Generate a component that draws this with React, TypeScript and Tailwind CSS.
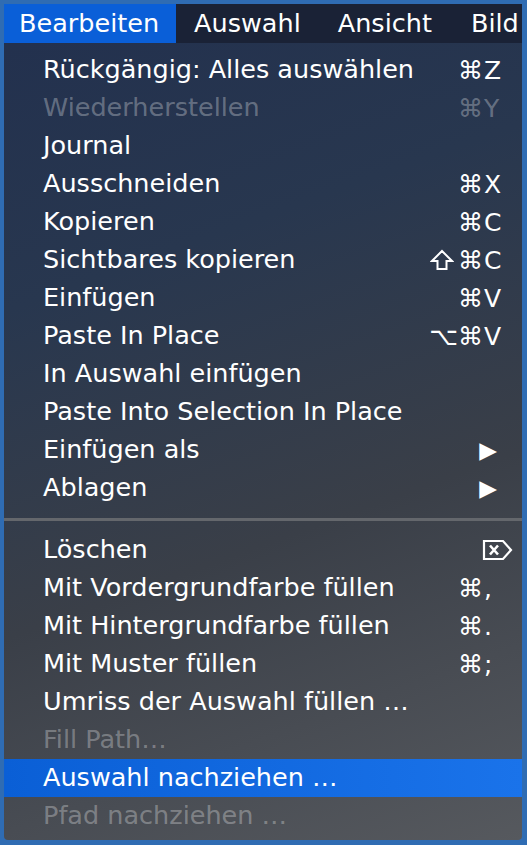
import React from 'react';

type Item = {
  label: string;
  mods?: string;
  keyChar?: string;
  disabled?: boolean;
  submenu?: boolean;
  del?: boolean;
  active?: boolean;
};

const groupA: Item[] = [
  { label: 'Rückgängig: Alles auswählen', mods: '⌘', keyChar: 'Z' },
  { label: 'Wiederherstellen', mods: '⌘', keyChar: 'Y', disabled: true },
  { label: 'Journal' },
  { label: 'Ausschneiden', mods: '⌘', keyChar: 'X' },
  { label: 'Kopieren', mods: '⌘', keyChar: 'C' },
  { label: 'Sichtbares kopieren', mods: 'shift', keyChar: 'C' },
  { label: 'Einfügen', mods: '⌘', keyChar: 'V' },
  { label: 'Paste In Place', mods: '⌥⌘', keyChar: 'V' },
  { label: 'In Auswahl einfügen' },
  { label: 'Paste Into Selection In Place' },
  { label: 'Einfügen als', submenu: true },
  { label: 'Ablagen', submenu: true },
];

const groupB: Item[] = [
  { label: 'Löschen', del: true },
  { label: 'Mit Vordergrundfarbe füllen', mods: '⌘', keyChar: ',' },
  { label: 'Mit Hintergrundfarbe füllen', mods: '⌘', keyChar: '.' },
  { label: 'Mit Muster füllen', mods: '⌘', keyChar: ';' },
  { label: 'Umriss der Auswahl füllen …' },
  { label: 'Fill Path…', disabled: true },
  { label: 'Auswahl nachziehen …', active: true },
  { label: 'Pfad nachziehen …', disabled: true },
];

function DeleteIcon() {
  return (
    <svg width="31" height="22" viewBox="0 0 31 22" fill="none" stroke="white" strokeWidth="2.2">
      <path d="M2 2 H21 L29 11 L21 20 H2 Z" strokeLinejoin="miter" />
      <path d="M8 6.5 L16 15.5 M16 6.5 L8 15.5" strokeWidth="2.6" />
    </svg>
  );
}

function ShiftIcon() {
  return (
    <svg width="24" height="22" viewBox="0 0 24 22" fill="none" stroke="white" strokeWidth="2" className="mr-[4px]">
      <path d="M12 2 L22 12 H16.5 V20 H7.5 V12 H2 Z" strokeLinejoin="miter" />
    </svg>
  );
}

function Row({ item }: { item: Item }) {
  const color = item.disabled ? 'text-white/30' : 'text-white';
  return (
    <div
      className={`h-[38px] flex items-center pl-[39px] pr-[22px] ${color} ${
        item.active ? 'bg-[linear-gradient(90deg,#0a5fd6,#1a73ea)]' : ''
      }`}
    >
      <span className="flex-1 whitespace-nowrap">{item.label}</span>
      {item.keyChar && (
        <span className="flex items-center text-[25px]">
          {item.mods === 'shift' ? (
            <span className="flex items-center">
              <ShiftIcon />⌘
            </span>
          ) : (
            <span className="text-right">{item.mods}</span>
          )}
          <span className="w-[17px] text-left pl-[1px]">{item.keyChar}</span>
        </span>
      )}
      {item.submenu && <span className="text-[23px] mr-[3px]">▶</span>}
      {item.del && (
        <span className="-mr-[13px] flex items-center">
          <DeleteIcon />
        </span>
      )}
    </div>
  );
}

export default function App() {
  return (
    <div className="w-[527px] h-[845px] bg-[#2f6cb3] p-[4px] pr-[5px] pb-[5px] font-['DejaVu_Sans',sans-serif] text-[25.5px] leading-none">
      <div className="h-full flex flex-col rounded-b-[4px] overflow-hidden bg-[linear-gradient(160deg,#22304e_0%,#28374f_30%,#3a3f48_62%,#56595e_100%)]">
        <div className="h-[39px] flex items-center bg-[#1a2236] text-white">
          <span className="h-full flex items-center bg-[#0a5fd8] pl-[15px] pr-[17px]">Bearbeiten</span>
          <span className="ml-[18px]">Auswahl</span>
          <span className="ml-[37px]">Ansicht</span>
          <span className="ml-[39px]">Bild</span>
        </div>
        <div className="pt-[8px] flex flex-col">
          {groupA.map((it) => (
            <Row key={it.label} item={it} />
          ))}
          <div className="h-[3px] mt-[11px] mb-[10px] bg-[#64676c]" />
          {groupB.map((it) => (
            <Row key={it.label} item={it} />
          ))}
        </div>
      </div>
    </div>
  );
}
